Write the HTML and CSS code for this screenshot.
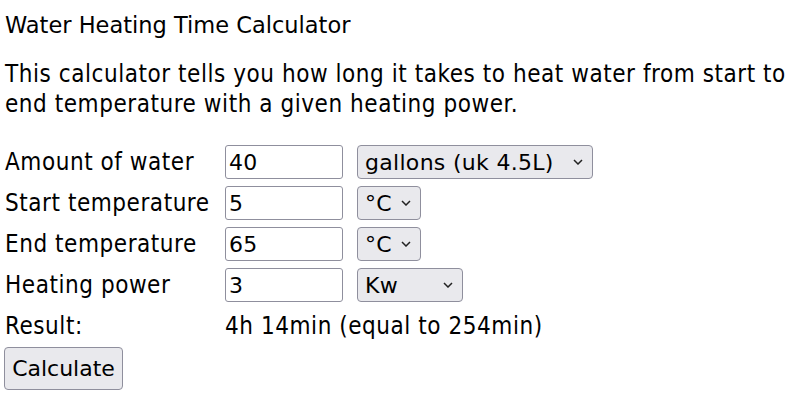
FILE: index.html
```html
<!DOCTYPE html>
<html lang="en">
<head>
<meta charset="utf-8">
<title>Water Heating Time Calculator</title>
<link rel="stylesheet" href="styles.css">
</head>
<body>
<div class="title">Water Heating Time Calculator</div>
<p class="intro">This calculator tells you how long it takes to heat water from start to<br>end temperature with a given heating power.</p>
<form>
  <div class="calc">
    <label class="lbl" for="amount">Amount of water</label>
    <input class="num" id="amount" type="text" value="40">
    <select class="sel sel-vol">
      <option>gallons (uk 4.5L)</option>
      <option>liters</option>
      <option>gallons (us 3.8L)</option>
    </select>

    <label class="lbl" for="start">Start temperature</label>
    <input class="num" id="start" type="text" value="5">
    <select class="sel sel-temp">
      <option>°C</option>
      <option>°F</option>
    </select>

    <label class="lbl" for="end">End temperature</label>
    <input class="num" id="end" type="text" value="65">
    <select class="sel sel-temp">
      <option>°C</option>
      <option>°F</option>
    </select>

    <label class="lbl" for="power">Heating power</label>
    <input class="num" id="power" type="text" value="3">
    <select class="sel sel-pow">
      <option>Kw</option>
      <option>W</option>
      <option>BTU/h</option>
    </select>

    <span class="lbl">Result:</span>
    <span class="result">4h 14min (equal to 254min)</span>
  </div>
  <button class="btn" type="button">Calculate</button>
</form>
</body>
</html>
```

FILE: styles.css
```css
html, body {
  margin: 0;
  padding: 0;
  background: #fff;
}

body {
  padding: 12px 0 0 5px;
  color: #000;
  font-family: "DejaVu Sans Condensed", "DejaVu Sans", sans-serif;
  font-stretch: condensed;
  font-size: 24px;
  letter-spacing: 0.55px;
}

.title {
  font-family: "DejaVu Sans", sans-serif;
  font-stretch: normal;
  letter-spacing: 0;
  font-size: 22.5px;
  line-height: 26px;
  margin: 0;
}

.intro {
  margin: 21px 0 0 0;
  line-height: 30px;
}

.calc {
  margin-top: 26px;
  display: grid;
  grid-template-columns: 220px 132px auto;
  grid-auto-rows: 34px;
  row-gap: 7px;
  align-items: center;
  justify-items: start;
}

.lbl {
  line-height: 28px;
}

.result {
  grid-column: 2 / 4;
  line-height: 28px;
}

.num,
.sel,
.btn {
  font-family: "DejaVu Sans", sans-serif;
  font-stretch: normal;
  letter-spacing: 0.3px;
  font-size: 22px;
  color: #000;
}

.num {
  box-sizing: border-box;
  width: 118px;
  height: 34px;
  margin: 0;
  padding: 0 3px;
  border: 1px solid #8f8f9d;
  border-radius: 3px;
  background: #fff;
}

.sel {
  box-sizing: border-box;
  -webkit-appearance: none;
  appearance: none;
  height: 34px;
  margin: 0;
  padding: 0 24px 0 7px;
  border: 1px solid #8f8f9d;
  border-radius: 4px;
  background-color: #e9e9ed;
  background-image: url("data:image/svg+xml,%3Csvg xmlns='http://www.w3.org/2000/svg' width='10' height='6' viewBox='0 0 10 6'%3E%3Cpath d='M1 1l4 4 4-4' fill='none' stroke='%23222' stroke-width='1.5'/%3E%3C/svg%3E");
  background-repeat: no-repeat;
  background-position: right 9px center;
}

.sel-vol { width: 236px; }
.sel-temp { width: 64px; }
.sel-pow { width: 106px; }

.btn {
  display: block;
  box-sizing: border-box;
  width: 119px;
  height: 43px;
  margin: 4px 0 0 -1px;
  padding: 0 6px;
  border: 1px solid #8f8f9d;
  border-radius: 4px;
  background: #e9e9ed;
  letter-spacing: 0;
}
```
